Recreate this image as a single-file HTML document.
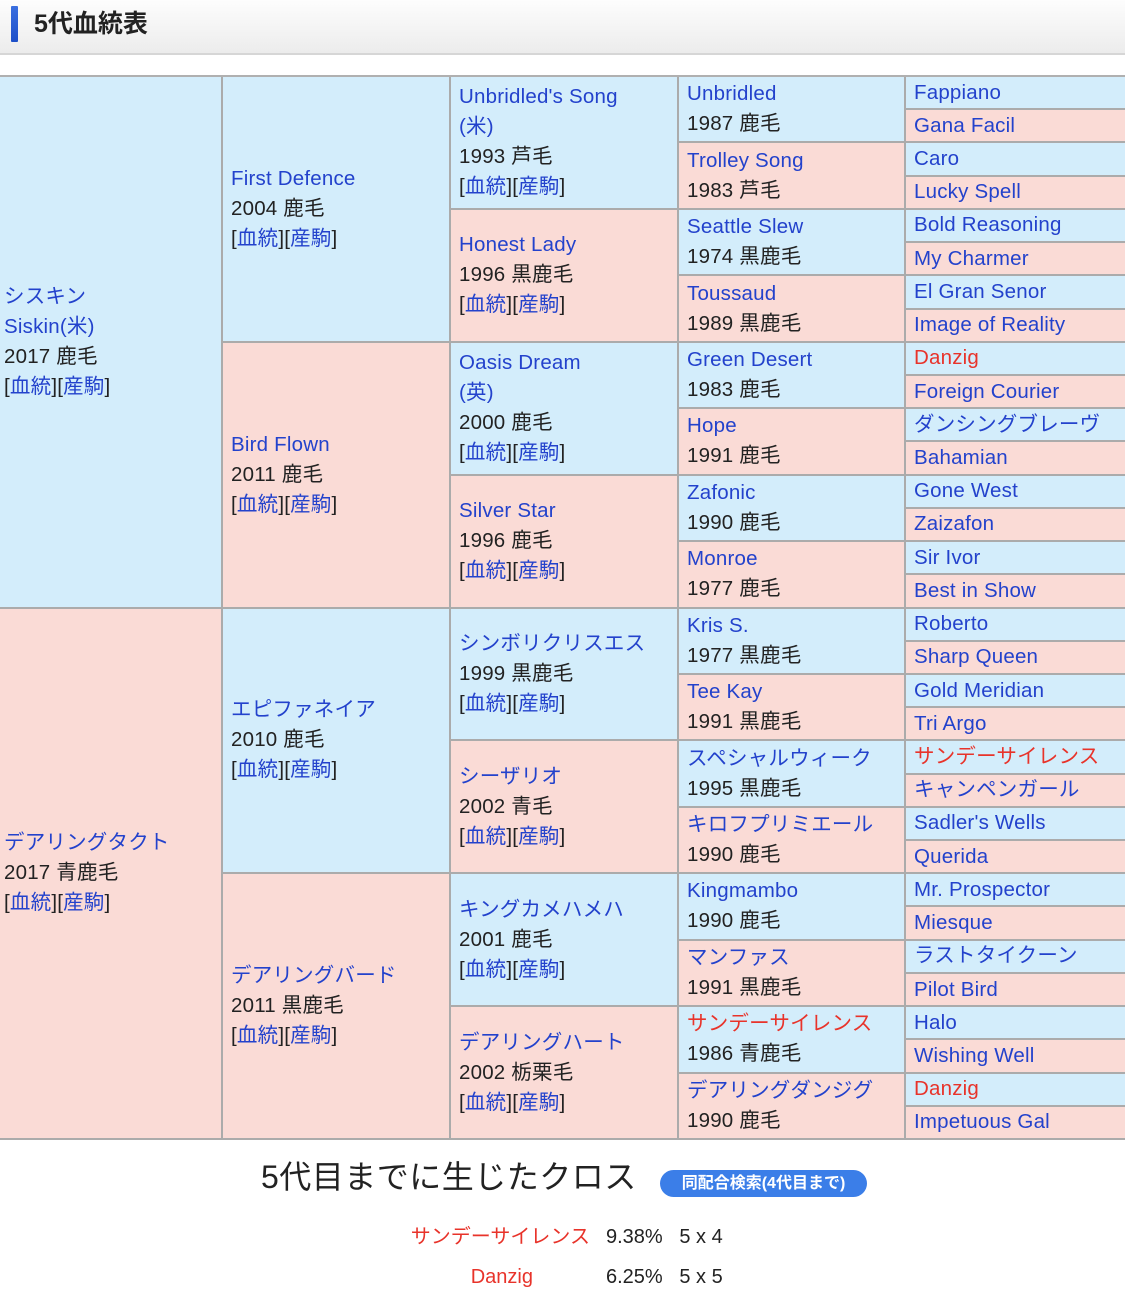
<!DOCTYPE html>
<html><head><meta charset="utf-8"><style>
*{margin:0;padding:0;box-sizing:border-box}
body{width:1125px;height:1306px;background:#fff;font-family:"Liberation Sans","Noto Sans CJK JP",sans-serif;position:relative;overflow:hidden;color:#222}
.hd{position:absolute;left:0;top:0;width:1125px;height:55px;background:linear-gradient(#fdfdfd,#ececec);border-bottom:2px solid #d6d6d6}
.hd .bar{position:absolute;left:11px;top:6px;width:7px;height:36px;background:linear-gradient(#3a6fe0,#1d4fc8);border-radius:1px}
.hd h1{position:absolute;left:34px;top:8px;font-size:25px;font-weight:bold;color:#222;line-height:32px}
.g{position:absolute;left:0;top:75px;width:1125px;height:1065px;display:grid;grid-template-columns:223px 228px 228px 227px 219px;grid-template-rows:repeat(32,1fr);border-top:2px solid #b0b0b0}
.g div{border-right:2px solid #ababab;border-bottom:2px solid #ababab;display:flex;flex-direction:column;justify-content:center;padding-left:8px;font-size:20.5px;line-height:30px;letter-spacing:0.2px}
.g .c1{padding-left:4px}
.b{background:#d3edfb}.p{background:#fadbd6}
a{color:#2342cc;text-decoration:none}
.r{color:#e8332a}
.c5{border-right:none!important}
.t{position:absolute;left:261px;top:1155px;font-size:32px;line-height:44px;color:#222;letter-spacing:0.5px}
.btn{position:absolute;left:660px;top:1170px;width:207px;height:27px;background:#3b7ee8;border-radius:14px;color:#fff;font-weight:bold;font-size:16px;line-height:27px;text-align:center}
.row{position:absolute;font-size:20px;line-height:26px}
</style></head><body>
<div class="hd"><div class="bar"></div><h1>5代血統表</h1></div>
<div class="g">
<div class="b c1" style="grid-column:1;grid-row:1/17"><a>シスキン<br>Siskin(米)</a><span>2017 鹿毛</span><span>[<a>血統</a>][<a>産駒</a>]</span></div>
<div class="p c1" style="grid-column:1;grid-row:17/33"><a>デアリングタクト</a><span>2017 青鹿毛</span><span>[<a>血統</a>][<a>産駒</a>]</span></div>

<div class="b" style="grid-column:2;grid-row:1/9"><a>First Defence</a><span>2004 鹿毛</span><span>[<a>血統</a>][<a>産駒</a>]</span></div>
<div class="p" style="grid-column:2;grid-row:9/17"><a>Bird Flown</a><span>2011 鹿毛</span><span>[<a>血統</a>][<a>産駒</a>]</span></div>
<div class="b" style="grid-column:2;grid-row:17/25"><a>エピファネイア</a><span>2010 鹿毛</span><span>[<a>血統</a>][<a>産駒</a>]</span></div>
<div class="p" style="grid-column:2;grid-row:25/33"><a>デアリングバード</a><span>2011 黒鹿毛</span><span>[<a>血統</a>][<a>産駒</a>]</span></div>

<div class="b" style="grid-column:3;grid-row:1/5"><a>Unbridled's Song<br>(米)</a><span>1993 芦毛</span><span>[<a>血統</a>][<a>産駒</a>]</span></div>
<div class="p" style="grid-column:3;grid-row:5/9"><a>Honest Lady</a><span>1996 黒鹿毛</span><span>[<a>血統</a>][<a>産駒</a>]</span></div>
<div class="b" style="grid-column:3;grid-row:9/13"><a>Oasis Dream<br>(英)</a><span>2000 鹿毛</span><span>[<a>血統</a>][<a>産駒</a>]</span></div>
<div class="p" style="grid-column:3;grid-row:13/17"><a>Silver Star</a><span>1996 鹿毛</span><span>[<a>血統</a>][<a>産駒</a>]</span></div>
<div class="b" style="grid-column:3;grid-row:17/21"><a>シンボリクリスエス</a><span>1999 黒鹿毛</span><span>[<a>血統</a>][<a>産駒</a>]</span></div>
<div class="p" style="grid-column:3;grid-row:21/25"><a>シーザリオ</a><span>2002 青毛</span><span>[<a>血統</a>][<a>産駒</a>]</span></div>
<div class="b" style="grid-column:3;grid-row:25/29"><a>キングカメハメハ</a><span>2001 鹿毛</span><span>[<a>血統</a>][<a>産駒</a>]</span></div>
<div class="p" style="grid-column:3;grid-row:29/33"><a>デアリングハート</a><span>2002 栃栗毛</span><span>[<a>血統</a>][<a>産駒</a>]</span></div>

<div class="b" style="grid-column:4;grid-row:1/3"><a>Unbridled</a><span>1987 鹿毛</span></div>
<div class="p" style="grid-column:4;grid-row:3/5"><a>Trolley Song</a><span>1983 芦毛</span></div>
<div class="b" style="grid-column:4;grid-row:5/7"><a>Seattle Slew</a><span>1974 黒鹿毛</span></div>
<div class="p" style="grid-column:4;grid-row:7/9"><a>Toussaud</a><span>1989 黒鹿毛</span></div>
<div class="b" style="grid-column:4;grid-row:9/11"><a>Green Desert</a><span>1983 鹿毛</span></div>
<div class="p" style="grid-column:4;grid-row:11/13"><a>Hope</a><span>1991 鹿毛</span></div>
<div class="b" style="grid-column:4;grid-row:13/15"><a>Zafonic</a><span>1990 鹿毛</span></div>
<div class="p" style="grid-column:4;grid-row:15/17"><a>Monroe</a><span>1977 鹿毛</span></div>
<div class="b" style="grid-column:4;grid-row:17/19"><a>Kris S.</a><span>1977 黒鹿毛</span></div>
<div class="p" style="grid-column:4;grid-row:19/21"><a>Tee Kay</a><span>1991 黒鹿毛</span></div>
<div class="b" style="grid-column:4;grid-row:21/23"><a>スペシャルウィーク</a><span>1995 黒鹿毛</span></div>
<div class="p" style="grid-column:4;grid-row:23/25"><a>キロフプリミエール</a><span>1990 鹿毛</span></div>
<div class="b" style="grid-column:4;grid-row:25/27"><a>Kingmambo</a><span>1990 鹿毛</span></div>
<div class="p" style="grid-column:4;grid-row:27/29"><a>マンファス</a><span>1991 黒鹿毛</span></div>
<div class="b" style="grid-column:4;grid-row:29/31"><a class="r">サンデーサイレンス</a><span>1986 青鹿毛</span></div>
<div class="p" style="grid-column:4;grid-row:31/33"><a>デアリングダンジグ</a><span>1990 鹿毛</span></div>

<div class="b c5" style="grid-column:5;grid-row:1"><a>Fappiano</a></div>
<div class="p c5" style="grid-column:5;grid-row:2"><a>Gana Facil</a></div>
<div class="b c5" style="grid-column:5;grid-row:3"><a>Caro</a></div>
<div class="p c5" style="grid-column:5;grid-row:4"><a>Lucky Spell</a></div>
<div class="b c5" style="grid-column:5;grid-row:5"><a>Bold Reasoning</a></div>
<div class="p c5" style="grid-column:5;grid-row:6"><a>My Charmer</a></div>
<div class="b c5" style="grid-column:5;grid-row:7"><a>El Gran Senor</a></div>
<div class="p c5" style="grid-column:5;grid-row:8"><a>Image of Reality</a></div>
<div class="b c5" style="grid-column:5;grid-row:9"><a class="r">Danzig</a></div>
<div class="p c5" style="grid-column:5;grid-row:10"><a>Foreign Courier</a></div>
<div class="b c5" style="grid-column:5;grid-row:11"><a>ダンシングブレーヴ</a></div>
<div class="p c5" style="grid-column:5;grid-row:12"><a>Bahamian</a></div>
<div class="b c5" style="grid-column:5;grid-row:13"><a>Gone West</a></div>
<div class="p c5" style="grid-column:5;grid-row:14"><a>Zaizafon</a></div>
<div class="b c5" style="grid-column:5;grid-row:15"><a>Sir Ivor</a></div>
<div class="p c5" style="grid-column:5;grid-row:16"><a>Best in Show</a></div>
<div class="b c5" style="grid-column:5;grid-row:17"><a>Roberto</a></div>
<div class="p c5" style="grid-column:5;grid-row:18"><a>Sharp Queen</a></div>
<div class="b c5" style="grid-column:5;grid-row:19"><a>Gold Meridian</a></div>
<div class="p c5" style="grid-column:5;grid-row:20"><a>Tri Argo</a></div>
<div class="b c5" style="grid-column:5;grid-row:21"><a class="r">サンデーサイレンス</a></div>
<div class="p c5" style="grid-column:5;grid-row:22"><a>キャンペンガール</a></div>
<div class="b c5" style="grid-column:5;grid-row:23"><a>Sadler's Wells</a></div>
<div class="p c5" style="grid-column:5;grid-row:24"><a>Querida</a></div>
<div class="b c5" style="grid-column:5;grid-row:25"><a>Mr. Prospector</a></div>
<div class="p c5" style="grid-column:5;grid-row:26"><a>Miesque</a></div>
<div class="b c5" style="grid-column:5;grid-row:27"><a>ラストタイクーン</a></div>
<div class="p c5" style="grid-column:5;grid-row:28"><a>Pilot Bird</a></div>
<div class="b c5" style="grid-column:5;grid-row:29"><a>Halo</a></div>
<div class="p c5" style="grid-column:5;grid-row:30"><a>Wishing Well</a></div>
<div class="b c5" style="grid-column:5;grid-row:31"><a class="r">Danzig</a></div>
<div class="p c5" style="grid-column:5;grid-row:32"><a>Impetuous Gal</a></div>
</div>
<div class="t">5代目までに生じたクロス</div>
<div class="btn">同配合検索(4代目まで)</div>
<div class="row r" style="right:535px;top:1224px">サンデーサイレンス</div>
<div class="row" style="left:606px;top:1224px">9.38%&nbsp;&nbsp;&nbsp;5 x 4</div>
<div class="row r" style="right:592px;top:1264px">Danzig</div>
<div class="row" style="left:606px;top:1264px">6.25%&nbsp;&nbsp;&nbsp;5 x 5</div>
</body></html>
